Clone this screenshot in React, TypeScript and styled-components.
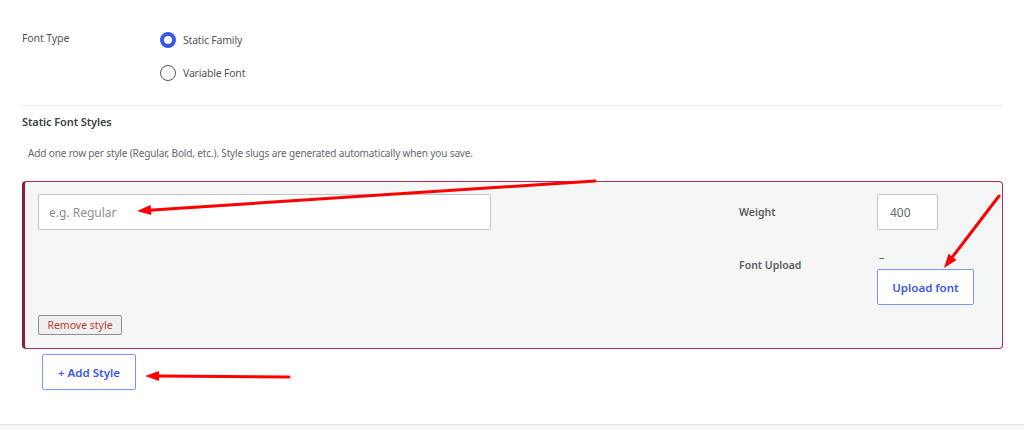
import styled, { createGlobalStyle } from "styled-components";

const GlobalStyle = createGlobalStyle`
    * {
        box-sizing: border-box;
    }

    body {
        margin: 0;
        background: #fff;
        font-family: "Noto Sans", "Open Sans", sans-serif;
        color: #50575e;
    }
`;

interface IArrowProps {
    from: [number, number];
    to: [number, number];
}

// red pointer drawn over the form
const Arrow: React.FC<IArrowProps> = ({ from, to }) => {
    const [x1, y1] = from;
    const [x2, y2] = to;
    const angle = Math.atan2(y2 - y1, x2 - x1);
    const len = 14;
    const half = 5;
    const bx = x2 - Math.cos(angle) * len;
    const by = y2 - Math.sin(angle) * len;
    const px = -Math.sin(angle) * half;
    const py = Math.cos(angle) * half;
    const head = `${x2},${y2} ${bx + px},${by + py} ${bx - px},${by - py}`;

    return (
        <g>
            <line x1={x1} y1={y1} x2={bx + Math.cos(angle) * 2} y2={by + Math.sin(angle) * 2} stroke="#ff0000" strokeWidth={3} strokeLinecap="round" />
            <polygon points={head} fill="#ff0000" />
        </g>
    );
};

export default function App() {
    return (
        <>
            <GlobalStyle />
            <Page>
                <Content>
                    <FieldRow>
                        <FieldLabel>Font Type</FieldLabel>
                        <Options>
                            <Option>
                                <Radio $checked />
                                <span>Static Family</span>
                            </Option>
                            <Option>
                                <Radio />
                                <span>Variable Font</span>
                            </Option>
                        </Options>
                    </FieldRow>

                    <Section>
                        <SectionTitle>Static Font Styles</SectionTitle>
                        <Description>
                            Add one row per style (Regular, Bold, etc.). Style slugs are generated automatically when you save.
                        </Description>

                        <StyleCard>
                            <StyleGrid>
                                <NameInput type="text" placeholder="e.g. Regular" />
                                <RowLabel>Weight</RowLabel>
                                <WeightInput type="text" defaultValue="400" />
                                <RowLabel $offset>Font Upload</RowLabel>
                                <UploadCell>
                                    <Dash>–</Dash>
                                    <OutlineButton $width={97}>Upload font</OutlineButton>
                                </UploadCell>
                            </StyleGrid>
                            <RemoveButton>Remove style</RemoveButton>
                        </StyleCard>

                        <AddRow>
                            <OutlineButton $width={94}>+ Add Style</OutlineButton>
                        </AddRow>
                    </Section>
                </Content>
                <Footer />

                <Overlay width="1024" height="430" viewBox="0 0 1024 430">
                    <Arrow from={[595, 181]} to={[137, 211]} />
                    <Arrow from={[999, 196]} to={[944, 268]} />
                    <Arrow from={[289, 377]} to={[145, 376]} />
                </Overlay>
            </Page>
        </>
    );
}

const Page = styled.div`
    position: relative;
    width: 1024px;
    height: 430px;
    display: flex;
    flex-direction: column;
    overflow: hidden;
`;

const Content = styled.div`
    height: 425px;
    padding: 30px 21px 0 22px;
    border-bottom: 1px solid #e3e3e3;
`;

const Footer = styled.div`
    flex: 1;
    background: #f6f6f6;
`;

const FieldRow = styled.div`
    display: flex;
    padding-bottom: 22px;
    border-bottom: 1px solid #ebebeb;
`;

const FieldLabel = styled.div`
    width: 138px;
    font-size: 10.5px;
    line-height: 16px;
    letter-spacing: -0.1px;
    color: #50575e;
`;

const Options = styled.div`
    display: flex;
    flex-direction: column;
    gap: 13px;
`;

const Option = styled.label`
    display: flex;
    align-items: center;
    gap: 7px;
    height: 20px;
    padding-bottom: 1px;
    font-size: 10.5px;
    letter-spacing: -0.2px;
    color: #50575e;
`;

const Radio = styled.span<{ $checked?: boolean }>`
    width: 16px;
    height: 16px;
    margin-top: 1px;
    border-radius: 50%;
    background: #fff;
    border: ${({ $checked }) => ($checked ? "4.5px solid #3858e9" : "1.5px solid #50575e")};
`;

const Section = styled.div`
    padding-top: 8px;
`;

const SectionTitle = styled.h3`
    margin: 0;
    font-size: 11px;
    line-height: 16px;
    font-weight: 600;
    letter-spacing: -0.1px;
    color: #3c434a;
`;

const Description = styled.p`
    margin: 15px 0 20px 6px;
    font-size: 10px;
    line-height: 16px;
    letter-spacing: -0.14px;
    color: #646970;
`;

const StyleCard = styled.div`
    background: #f5f6f6;
    border: 1px solid #b8285c;
    border-left: 3px solid #8c1a45;
    border-radius: 4px;
    padding: 12px 28px 13px 13px;
    display: flex;
    flex-direction: column;
    align-items: flex-start;
`;

const StyleGrid = styled.div`
    width: 100%;
    display: grid;
    grid-template-columns: 453px 1fr 138px 97px;
    row-gap: 16px;
    align-items: start;
`;

const TextInput = styled.input`
    height: 36px;
    border: 1px solid #c3c4c7;
    border-radius: 2px;
    background: #fff;
    font-family: inherit;
    font-size: 12px;
    color: #646970;
    padding: 0 10px;
    outline: none;

    &::placeholder {
        color: #8c8f94;
    }
`;

const NameInput = styled(TextInput)`
    grid-column: 1;
    width: 453px;
`;

const WeightInput = styled(TextInput)`
    width: 61px;
    padding: 0 12px;
`;

const RowLabel = styled.div<{ $offset?: boolean }>`
    grid-column: 3;
    font-size: 10.5px;
    font-weight: 600;
    line-height: 16px;
    color: #585d63;
    align-self: ${({ $offset }) => ($offset ? "start" : "center")};
    margin-top: ${({ $offset }) => ($offset ? "11px" : "0")};
`;

const UploadCell = styled.div`
    display: flex;
    flex-direction: column;
    align-items: flex-start;
`;

const Dash = styled.span`
    font-size: 11px;
    line-height: 16px;
    padding: 3px 0 0 2px;
    color: #50575e;
`;

const OutlineButton = styled.button<{ $width: number }>`
    width: ${({ $width }) => $width}px;
    height: 36px;
    margin-top: 4px;
    background: #fff;
    border: 1px solid #7b96f2;
    border-radius: 2px;
    color: #3858e9;
    font-family: inherit;
    font-size: 11.5px;
    font-weight: 600;
    cursor: pointer;
`;

const RemoveButton = styled.button`
    margin-top: 10px;
    height: 20px;
    width: 84px;
    padding: 0;
    background: #f0f0f0;
    border: 1px solid #8c8f94;
    border-radius: 2px;
    color: #c0392f;
    font-family: inherit;
    font-size: 10.5px;
    cursor: pointer;
`;

const AddRow = styled.div`
    padding-left: 20px;

    ${OutlineButton} {
        margin-top: 5px;
    }
`;

const Overlay = styled.svg`
    position: absolute;
    top: 0;
    left: 0;
    pointer-events: none;
`;
